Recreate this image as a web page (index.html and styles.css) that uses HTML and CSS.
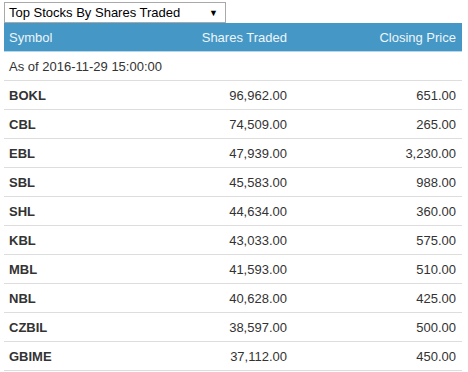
FILE: index.html
```html
<!DOCTYPE html>
<html>
<head>
<meta charset="utf-8">
<link rel="stylesheet" href="styles.css">
</head>
<body>
<div class="widget">
  <div class="select">
    <span class="select-label">Top Stocks By Shares Traded</span>
    <span class="arrow">▼</span>
  </div>
  <div class="table">
    <div class="row head">
      <div class="c sym">Symbol</div>
      <div class="c num">Shares Traded</div>
      <div class="c num">Closing Price</div>
    </div>
    <div class="row asof">
      <div class="c">As of 2016-11-29 15:00:00</div>
    </div>
    <div class="row"><div class="c sym b">BOKL</div><div class="c num">96,962.00</div><div class="c num">651.00</div></div>
    <div class="row"><div class="c sym b">CBL</div><div class="c num">74,509.00</div><div class="c num">265.00</div></div>
    <div class="row"><div class="c sym b">EBL</div><div class="c num">47,939.00</div><div class="c num">3,230.00</div></div>
    <div class="row"><div class="c sym b">SBL</div><div class="c num">45,583.00</div><div class="c num">988.00</div></div>
    <div class="row"><div class="c sym b">SHL</div><div class="c num">44,634.00</div><div class="c num">360.00</div></div>
    <div class="row"><div class="c sym b">KBL</div><div class="c num">43,033.00</div><div class="c num">575.00</div></div>
    <div class="row"><div class="c sym b">MBL</div><div class="c num">41,593.00</div><div class="c num">510.00</div></div>
    <div class="row"><div class="c sym b">NBL</div><div class="c num">40,628.00</div><div class="c num">425.00</div></div>
    <div class="row"><div class="c sym b">CZBIL</div><div class="c num">38,597.00</div><div class="c num">500.00</div></div>
    <div class="row"><div class="c sym b">GBIME</div><div class="c num">37,112.00</div><div class="c num">450.00</div></div>
  </div>
</div>
</body>
</html>
```
FILE: styles.css
```css
html, body {
  margin: 0;
  padding: 0;
  background: #fff;
}
body {
  font-family: "Liberation Sans", Arial, sans-serif;
  font-size: 13px;
  color: #333;
}
.widget {
  padding: 2px 6px 0 4px;
}
.select {
  width: 218px;
  height: 19px;
  border: 1px solid #a9a9a9;
  display: flex;
  align-items: center;
  justify-content: space-between;
  padding: 0 7px 0 4px;
  box-sizing: content-box;
  width: 209px;
  color: #000;
  font-size: 13px;
}
.arrow {
  font-size: 9px;
}
.table {
  display: flex;
  flex-direction: column;
}
.row {
  display: grid;
  grid-template-columns: 186px 105px 1fr;
  height: 28px;
  align-items: center;
  border-bottom: 1px solid #ddd;
}
.head {
  background: #4598c6;
  color: #eef4f8;
  border-bottom: 1px solid #b8d6ea;
  height: 28px;
}
.asof {
  grid-template-columns: 1fr;
  height: 28px;
}
.c {
  padding: 0 8px 0 5px;
}
.num {
  text-align: right;
}
.row .num:last-child {
  padding-right: 6px;
}
.b {
  font-weight: bold;
}
```
